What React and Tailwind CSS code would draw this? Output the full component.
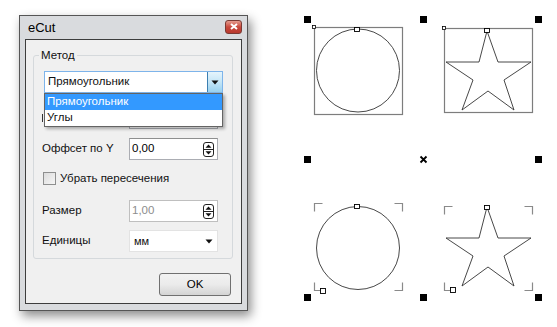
import React from 'react';

const font = { fontFamily: '"Liberation Sans", Arial, sans-serif' };

function SpinIcon() {
    return (
        <svg width="11" height="15" viewBox="0 0 11 15" className="shrink-0">
            <rect x="0.5" y="0.5" width="10" height="14" rx="2.5" fill="#fff" stroke="#222" />
            <line x1="1" y1="7.5" x2="10" y2="7.5" stroke="#222" />
            <path d="M5.5 2.5 L8.5 5.8 L2.5 5.8 Z" fill="#111" />
            <path d="M2.5 9.2 L8.5 9.2 L5.5 12.5 Z" fill="#111" />
        </svg>
    );
}

function Arrow() {
    return (
        <svg width="8" height="5" viewBox="0 0 8 5">
            <path d="M0.5 0.5 L7.5 0.5 L4 4.5 Z" fill="#111" />
        </svg>
    );
}

function SpinField({ value, disabled }) {
    return (
        <div className={`w-[89px] h-[22px] bg-white border flex items-center pl-[2px] pr-[3px] justify-between ${disabled ? 'border-[#bfbfbf]' : 'border-[#abadb3] border-t-[#8e8f8f]'}`}>
            <span className={disabled ? 'text-[#8d8d8d]' : 'text-black'}>{value}</span>
            <SpinIcon />
        </div>
    );
}

function FieldRow({ label, children, className = '' }) {
    return (
        <div className={`flex items-center ${className}`}>
            <span className="w-[87px] shrink-0">{label}</span>
            {children}
        </div>
    );
}

function Canvas() {
    const dots = [[307, 19], [423, 19], [538, 19], [307, 159], [538, 159], [307, 297], [423, 297], [538, 297]];
    const star = (dy) => [
        [487, 31], [498, 62], [531, 62], [504, 80], [514, 110],
        [488, 91], [462, 110], [473, 80], [446, 62], [479, 62],
    ].map(([x, y]) => `${x},${y + dy}`).join(' ');
    const brackets = (x1, y1, x2, y2) => {
        const a = 8;
        return `M${x1} ${y1 + a} V${y1} H${x1 + a} M${x2 - a} ${y1} H${x2} V${y1 + a} M${x1} ${y2 - a} V${y2} H${x1 + a} M${x2 - a} ${y2} H${x2} V${y2 - a}`;
    };
    return (
        <svg width="277" height="327" viewBox="280 0 277 327" className="shrink-0">
            {dots.map(([x, y], i) => (
                <rect key={i} x={x - 3} y={y - 3} width="7" height="7" fill="#000" />
            ))}
            <path d="M420.5 156.5 L426.5 162.5 M426.5 156.5 L420.5 162.5" stroke="#000" strokeWidth="1.8" />

            {/* top row: selected with frame */}
            <rect x="314.5" y="27.5" width="88" height="87" fill="none" stroke="#7d7d7d" strokeWidth="1.2" />
            <circle cx="358" cy="70.5" r="41.5" fill="none" stroke="#333" strokeWidth="0.9" />
            <rect x="312.5" y="25.5" width="3" height="3" fill="#fff" stroke="#000" strokeWidth="0.8" />
            <rect x="354.5" y="27.5" width="5" height="4" fill="#fff" stroke="#000" strokeWidth="0.9" />

            <rect x="444.5" y="28.5" width="88" height="84" fill="none" stroke="#7d7d7d" strokeWidth="1.2" />
            <polygon points={star(0)} fill="none" stroke="#333" strokeWidth="0.9" />
            <rect x="442.5" y="26.5" width="3" height="3" fill="#fff" stroke="#000" strokeWidth="0.8" />
            <rect x="484.5" y="28.5" width="5" height="4" fill="#fff" stroke="#000" strokeWidth="0.9" />

            {/* bottom row: corner brackets */}
            <path d={brackets(314.5, 203.5, 402.5, 290.5)} fill="none" stroke="#8a8a8a" strokeWidth="1.2" />
            <circle cx="358" cy="248" r="41.5" fill="none" stroke="#333" strokeWidth="0.9" />
            <rect x="354.5" y="204.5" width="5" height="4" fill="#fff" stroke="#000" strokeWidth="0.9" />
            <rect x="320.5" y="288.5" width="5" height="5" fill="#fff" stroke="#000" strokeWidth="0.9" />

            <path d={brackets(444.5, 206.5, 532.5, 290.5)} fill="none" stroke="#8a8a8a" strokeWidth="1.2" />
            <polygon points={star(176)} fill="none" stroke="#333" strokeWidth="0.9" />
            <rect x="484.5" y="205.5" width="5" height="4" fill="#fff" stroke="#000" strokeWidth="0.9" />
            <rect x="450.5" y="287.5" width="5" height="5" fill="#fff" stroke="#000" strokeWidth="0.9" />
        </svg>
    );
}

export default function App() {
    return (
        <div className="w-[557px] h-[327px] bg-white flex overflow-hidden text-[11.5px] text-[#111]" style={font}>
            <div className="w-[280px] shrink-0 pl-[19px] pt-[15px]">
                {/* Window */}
                <div className="w-[229px] border border-[#555] bg-[#d9dbde] px-[5px] pb-[6px] shadow-[3px_5px_10px_rgba(0,0,0,0.45)]">
                    {/* Title bar */}
                    <div className="h-[23px] flex items-center justify-between">
                        <span className="text-[13px] text-black ml-[3px]">eCut</span>
                        <div className="w-[17px] h-[14px] mb-[2px] rounded-[3px] border border-[#7a3a34] bg-gradient-to-b from-[#e49a8e] via-[#c9483c] to-[#b8382d] flex items-center justify-center">
                            <svg width="8" height="7" viewBox="0 0 8 7">
                                <path d="M1 1 L7 6 M7 1 L1 6" stroke="#fff" strokeWidth="2" />
                            </svg>
                        </div>
                    </div>

                    {/* Client area */}
                    <div className="h-[265px] border border-[#3d3d3d] bg-[#f0f0f0] pl-[7px] pt-[15px] pr-[10px] pb-[7px] flex flex-col">
                        {/* Group box */}
                        <div className="relative w-[200px] border border-[#d5d9dc] rounded-[3px] pl-[8px] pt-[15px] pb-[6px]">
                            <span className="absolute left-[5px] top-[-8px] bg-[#f0f0f0] px-[2px] leading-[14px]">Метод</span>

                            {/* Combo with open list */}
                            <div className="relative ml-[2px] w-[179px]">
                                <div className="h-[22px] bg-white border border-[#7eb4ea] flex items-center justify-between pl-[3px]">
                                    <span>Прямоугольник</span>
                                    <div className="w-[15px] h-[20px] border-l border-[#3c7fb1] bg-gradient-to-b from-[#e5f4fc] via-[#c4e5f6] to-[#98d1ef] flex items-center justify-center">
                                        <Arrow />
                                    </div>
                                </div>
                                <div className="absolute left-0 top-[22px] w-[179px] z-10 bg-white border border-[#646464] shadow-[2px_2px_3px_rgba(0,0,0,0.3)]">
                                    <div className="h-[16px] bg-[#3399ff] text-white pl-[2px] flex items-center">Прямоугольник</div>
                                    <div className="h-[16px] pl-[2px] flex items-center">Углы</div>
                                </div>
                            </div>

                            {/* row hidden under the open list; only the edge of its label peeks out */}
                            <div className="mt-[14px] flex items-center">
                                <div className="w-[87px] shrink-0 flex items-center h-[22px]">
                                    <div className="w-[1px] h-[8px] bg-[#333]" />
                                </div>
                                <SpinField value="0,00" />
                            </div>
                            <FieldRow label="Оффсет по Y" className="mt-[9px]">
                                <SpinField value="0,00" />
                            </FieldRow>

                            <div className="mt-[12px] flex items-center h-[13px] ml-[1px]">
                                <div className="w-[13px] h-[13px] border border-[#8e8f8f] bg-gradient-to-br from-[#dcdcdc] to-[#f6f6f6] shrink-0" />
                                <span className="ml-[4px]">Убрать пересечения</span>
                            </div>

                            <FieldRow label="Размер" className="mt-[15px]">
                                <SpinField value="1,00" disabled />
                            </FieldRow>
                            <FieldRow label="Единицы" className="mt-[8px]">
                                <div className="w-[89px] h-[22px] bg-white border border-[#e3e3e3] flex items-center justify-between pl-[4px] pr-[4px]">
                                    <span className="text-[11px]">мм</span>
                                    <Arrow />
                                </div>
                            </FieldRow>
                        </div>

                        {/* OK button */}
                        <div className="mt-[14px] self-end">
                            <div className="w-[72px] h-[23px] rounded-[3px] border border-[#707070] bg-gradient-to-b from-[#f2f2f2] via-[#ebebeb] to-[#d4d4d4] flex items-center justify-center text-black">
                                OK
                            </div>
                        </div>
                    </div>
                </div>
            </div>
            <Canvas />
        </div>
    );
}
